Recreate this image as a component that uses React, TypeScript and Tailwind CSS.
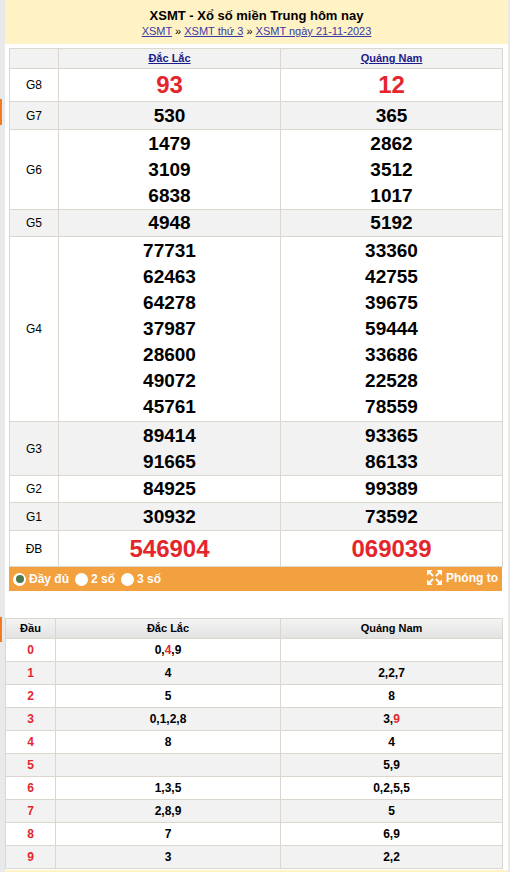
import React from "react";

const RED = "text-[#e4262c]";

type Prize = { label: string; a: string[]; b: string[]; h: string; big?: boolean; gray?: boolean };

const prizes: Prize[] = [
  { label: "G8", a: ["93"], b: ["12"], h: "h-[33px]", big: true },
  { label: "G7", a: ["530"], b: ["365"], h: "h-[28px]", gray: true },
  { label: "G6", a: ["1479", "3109", "6838"], b: ["2862", "3512", "1017"], h: "h-[80px]" },
  { label: "G5", a: ["4948"], b: ["5192"], h: "h-[27px]", gray: true },
  {
    label: "G4",
    a: ["77731", "62463", "64278", "37987", "28600", "49072", "45761"],
    b: ["33360", "42755", "39675", "59444", "33686", "22528", "78559"],
    h: "h-[185px]",
  },
  { label: "G3", a: ["89414", "91665"], b: ["93365", "86133"], h: "h-[54px]", gray: true },
  { label: "G2", a: ["84925"], b: ["99389"], h: "h-[27px]" },
  { label: "G1", a: ["30932"], b: ["73592"], h: "h-[28px]", gray: true },
  { label: "ĐB", a: ["546904"], b: ["069039"], h: "h-[36px]", big: true },
];

type Part = { t: string; red?: boolean };
const loto: { d: string; a: Part[]; b: Part[] }[] = [
  { d: "0", a: [{ t: "0," }, { t: "4", red: true }, { t: ",9" }], b: [] },
  { d: "1", a: [{ t: "4" }], b: [{ t: "2,2,7" }] },
  { d: "2", a: [{ t: "5" }], b: [{ t: "8" }] },
  { d: "3", a: [{ t: "0,1,2,8" }], b: [{ t: "3," }, { t: "9", red: true }] },
  { d: "4", a: [{ t: "8" }], b: [{ t: "4" }] },
  { d: "5", a: [], b: [{ t: "5,9" }] },
  { d: "6", a: [{ t: "1,3,5" }], b: [{ t: "0,2,5,5" }] },
  { d: "7", a: [{ t: "2,8,9" }], b: [{ t: "5" }] },
  { d: "8", a: [{ t: "7" }], b: [{ t: "6,9" }] },
  { d: "9", a: [{ t: "3" }], b: [{ t: "2,2" }] },
];

function Cell({ nums, big }: { nums: string[]; big?: boolean }) {
  return (
    <td className="border border-[#dcd7ce] p-0 text-center align-middle">
      {nums.map((n, i) => (
        <div
          key={i}
          className={
            big
              ? `text-[24px] font-bold leading-[30px] ${RED}`
              : "text-[19px] font-bold leading-[26px] text-black"
          }
        >
          {n}
        </div>
      ))}
    </td>
  );
}

function Parts({ parts }: { parts: Part[] }) {
  return (
    <>
      {parts.map((p, i) => (
        <span key={i} className={p.red ? RED : ""}>
          {p.t}
        </span>
      ))}
    </>
  );
}

function Radio({ checked, label }: { checked?: boolean; label: string }) {
  return (
    <div className="flex items-center gap-[3px]">
      <span className="flex h-[13px] w-[13px] items-center justify-center rounded-full bg-white">
        {checked && <span className="h-[8px] w-[8px] rounded-full bg-[#4c7a4c]" />}
      </span>
      <span>{label}</span>
    </div>
  );
}

function ExpandIcon() {
  return (
    <svg width="15" height="15" viewBox="0 0 16 16" fill="white">
      <g stroke="white" strokeWidth="2.2" strokeLinecap="butt">
        <line x1="6.5" y1="6.5" x2="3" y2="3" />
        <line x1="9.5" y1="6.5" x2="13" y2="3" />
        <line x1="6.5" y1="9.5" x2="3" y2="13" />
        <line x1="9.5" y1="9.5" x2="13" y2="13" />
      </g>
      <polygon points="0,0 6,0 0,6" />
      <polygon points="16,0 10,0 16,6" />
      <polygon points="0,16 6,16 0,10" />
      <polygon points="16,16 10,16 16,10" />
    </svg>
  );
}

export default function App() {
  return (
    <div
      className="flex h-[872px] w-[510px] overflow-hidden bg-white"
      style={{ fontFamily: '"Liberation Sans", Arial, sans-serif' }}
    >
      <div className="flex w-[5px] shrink-0 flex-col bg-[#e9e9e9]">
        <div className="mt-[99px] h-[26px] w-[2px] shrink-0 bg-[#f47a20]" />
        <div className="mt-[492px] h-[25px] w-[2px] shrink-0 bg-[#f47a20]" />
      </div>
      <div className="flex w-[503px] shrink-0 flex-col bg-white">
        <div className="flex h-[44px] shrink-0 flex-col items-center bg-[#fff2c4] pt-[8px]">
          <div className="text-[13px] font-bold leading-[15px] text-black">XSMT - Xổ số miền Trung hôm nay</div>
          <div className="mt-[2px] text-[11px] leading-[13px] text-[#3a3aa6]">
            <span className="underline">XSMT</span>
            <span className="text-black"> » </span>
            <span className="underline">XSMT thứ 3</span>
            <span className="text-black"> » </span>
            <span className="underline">XSMT ngày 21-11-2023</span>
          </div>
        </div>
        <div className="shrink-0 px-[4px] pt-[4px]">
          <table className="w-[493px] table-fixed border-collapse">
            <colgroup>
              <col className="w-[49px]" />
              <col className="w-[222px]" />
              <col className="w-[222px]" />
            </colgroup>
            <tbody>
              <tr className="h-[20px] bg-[#f2f2f2]">
                <td className="border border-[#dcd7ce]" />
                <td className="border border-[#dcd7ce] text-center text-[11px] font-bold text-[#1c1c8c] underline">
                  Đắc Lắc
                </td>
                <td className="border border-[#dcd7ce] text-center text-[11px] font-bold text-[#1c1c8c] underline">
                  Quảng Nam
                </td>
              </tr>
              {prizes.map((p) => (
                <tr key={p.label} className={`${p.h} ${p.gray ? "bg-[#f2f2f2]" : "bg-white"}`}>
                  <td className="border border-[#dcd7ce] p-0 text-center text-[12px] text-black">{p.label}</td>
                  <Cell nums={p.a} big={p.big} />
                  <Cell nums={p.b} big={p.big} />
                </tr>
              ))}
            </tbody>
          </table>
          <div className="flex h-[24px] w-[493px] items-center justify-between bg-[#f3a03f] pl-[4px] pr-[4px] text-[12px] font-bold text-white">
            <div className="flex items-center gap-[6px]">
              <Radio checked label="Đầy đủ" />
              <Radio label="2 số" />
              <Radio label="3 số" />
            </div>
            <div className="flex items-center gap-[4px] pb-[3px]">
              <ExpandIcon />
              <span>Phóng to</span>
            </div>
          </div>
        </div>
        <div className="h-[27px] shrink-0" />
        <table className="w-[497px] shrink-0 table-fixed border-collapse text-[12px] font-bold">
          <colgroup>
            <col className="w-[50px]" />
            <col className="w-[225px]" />
            <col className="w-[222px]" />
          </colgroup>
          <tbody>
            <tr className="h-[20px] bg-gradient-to-b from-[#f4f4f4] to-[#e2e2e2] text-[11px] text-black">
              <td className="border border-[#dcd7ce] text-center">Đầu</td>
              <td className="border border-[#dcd7ce] text-center">Đắc Lắc</td>
              <td className="border border-[#dcd7ce] text-center">Quảng Nam</td>
            </tr>
            {loto.map((r, i) => (
              <tr key={r.d} className={`h-[23px] ${i % 2 === 1 ? "bg-[#f2f2f2]" : "bg-white"}`}>
                <td className={`border border-[#dcd7ce] text-center ${RED}`}>{r.d}</td>
                <td className="border border-[#dcd7ce] text-center text-black">
                  <Parts parts={r.a} />
                </td>
                <td className="border border-[#dcd7ce] text-center text-black">
                  <Parts parts={r.b} />
                </td>
              </tr>
            ))}
          </tbody>
        </table>
        <div className="mt-[1px] h-[20px] shrink-0 bg-[#fff2c4]" />
      </div>
      <div className="w-[2px] shrink-0 bg-[#e9e9e9]" />
    </div>
  );
}
